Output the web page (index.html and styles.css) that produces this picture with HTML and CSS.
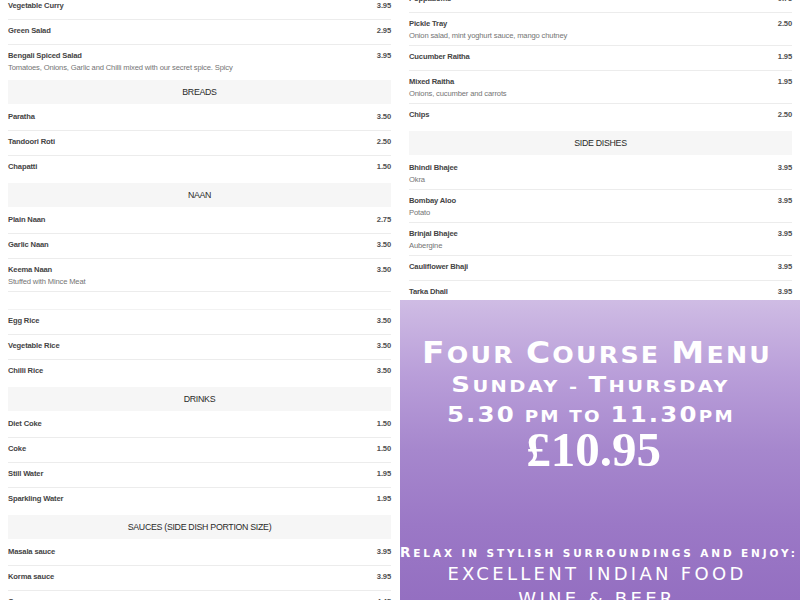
FILE: index.html
```html
<!DOCTYPE html>
<html lang="en">
<head>
<meta charset="utf-8">
<title>Menu</title>
<link rel="stylesheet" href="styles.css">
</head>
<body>
<div class="page">
  <div class="menu">
    <div class="col col-left">
      <div class="item"><div class="item-head"><span class="name">Vegetable Curry</span><span class="price">3.95</span></div></div>
      <div class="item"><div class="item-head"><span class="name">Green Salad</span><span class="price">2.95</span></div></div>
      <div class="item has-desc"><div class="item-head"><span class="name">Bengali Spiced Salad</span><span class="price">3.95</span></div><div class="desc">Tomatoes, Onions, Garlic and Chilli mixed with our secret spice. Spicy</div></div>
      <div class="section-head">BREADS</div>
      <div class="item"><div class="item-head"><span class="name">Paratha</span><span class="price">3.50</span></div></div>
      <div class="item"><div class="item-head"><span class="name">Tandoori Roti</span><span class="price">2.50</span></div></div>
      <div class="item"><div class="item-head"><span class="name">Chapatti</span><span class="price">1.50</span></div></div>
      <div class="section-head">NAAN</div>
      <div class="item"><div class="item-head"><span class="name">Plain Naan</span><span class="price">2.75</span></div></div>
      <div class="item"><div class="item-head"><span class="name">Garlic Naan</span><span class="price">3.50</span></div></div>
      <div class="item has-desc"><div class="item-head"><span class="name">Keema Naan</span><span class="price">3.50</span></div><div class="desc">Stuffed with Mince Meat</div></div>
      <div class="item spacer"></div>
      <div class="item"><div class="item-head"><span class="name">Egg Rice</span><span class="price">3.50</span></div></div>
      <div class="item"><div class="item-head"><span class="name">Vegetable Rice</span><span class="price">3.50</span></div></div>
      <div class="item"><div class="item-head"><span class="name">Chilli Rice</span><span class="price">3.50</span></div></div>
      <div class="section-head">DRINKS</div>
      <div class="item"><div class="item-head"><span class="name">Diet Coke</span><span class="price">1.50</span></div></div>
      <div class="item"><div class="item-head"><span class="name">Coke</span><span class="price">1.50</span></div></div>
      <div class="item"><div class="item-head"><span class="name">Still Water</span><span class="price">1.95</span></div></div>
      <div class="item"><div class="item-head"><span class="name">Sparkling Water</span><span class="price">1.95</span></div></div>
      <div class="section-head">SAUCES (SIDE DISH PORTION SIZE)</div>
      <div class="item"><div class="item-head"><span class="name">Masala sauce</span><span class="price">3.95</span></div></div>
      <div class="item"><div class="item-head"><span class="name">Korma sauce</span><span class="price">3.95</span></div></div>
      <div class="item"><div class="item-head"><span class="name">Curry sauce</span><span class="price">4.45</span></div></div>
    </div>
    <div class="col col-right">
      <div class="item"><div class="item-head"><span class="name">Poppadoms</span><span class="price">0.75</span></div></div>
      <div class="item has-desc"><div class="item-head"><span class="name">Pickle Tray</span><span class="price">2.50</span></div><div class="desc">Onion salad, mint yoghurt sauce, mango chutney</div></div>
      <div class="item"><div class="item-head"><span class="name">Cucumber Raitha</span><span class="price">1.95</span></div></div>
      <div class="item has-desc"><div class="item-head"><span class="name">Mixed Raitha</span><span class="price">1.95</span></div><div class="desc">Onions, cucumber and carrots</div></div>
      <div class="item"><div class="item-head"><span class="name">Chips</span><span class="price">2.50</span></div></div>
      <div class="section-head">SIDE DISHES</div>
      <div class="item has-desc"><div class="item-head"><span class="name">Bhindi Bhajee</span><span class="price">3.95</span></div><div class="desc">Okra</div></div>
      <div class="item has-desc"><div class="item-head"><span class="name">Bombay Aloo</span><span class="price">3.95</span></div><div class="desc">Potato</div></div>
      <div class="item has-desc"><div class="item-head"><span class="name">Brinjal Bhajee</span><span class="price">3.95</span></div><div class="desc">Aubergine</div></div>
      <div class="item"><div class="item-head"><span class="name">Cauliflower Bhaji</span><span class="price">3.95</span></div></div>
      <div class="item"><div class="item-head"><span class="name">Tarka Dhall</span><span class="price">3.95</span></div></div>
      <div class="item"><div class="item-head"><span class="name">Mushroom Bhajee</span><span class="price">3.95</span></div></div>
      <div class="item"><div class="item-head"><span class="name">Sag Aloo</span><span class="price">3.95</span></div></div>
    </div>
  </div>
  <div class="promo">
    <div class="p1"><span class="cap">F</span>our <span class="cap">C</span>ourse <span class="cap">M</span>enu</div>
    <div class="p2"><span class="cap">S</span>unday - <span class="cap">T</span>hursday</div>
    <div class="p3"><span class="cap">5.30</span> pm to <span class="cap">11.30</span>pm</div>
    <div class="p4">£10.95</div>
    <div class="p5"><span class="cap">R</span>elax in stylish surroundings and enjoy:</div>
    <div class="p6">EXCELLENT INDIAN FOOD</div>
    <div class="p7">WINE &amp; BEER</div>
  </div>
</div>
</body>
</html>
```
FILE: styles.css
```css
html, body {
  margin: 0;
  padding: 0;
  background: #ffffff;
  overflow: hidden;
}

.page {
  position: relative;
  width: 800px;
  height: 600px;
  overflow: hidden;
  font-family: "Liberation Sans", Arial, sans-serif;
}

.menu {
  display: grid;
  grid-template-columns: 383px 383px;
  column-gap: 18px;
  padding: 0 8px;
  align-items: start;
}

.col-left { margin-top: -5px; }
.col-right { margin-top: -12px; }

.item {
  padding: 5px 0 7px;
  border-bottom: 1px solid #ececec;
}
.item.has-desc { padding-bottom: 3px; }
.item:has(+ .section-head) { border-bottom-color: transparent; }
.item.spacer {
  height: 18px;
  padding: 0;
  box-sizing: border-box;
  border-bottom-color: #f2f2f2;
}

.item-head {
  display: flex;
  justify-content: space-between;
  line-height: 12px;
  font-size: 7.6px;
  letter-spacing: -0.15px;
  font-weight: bold;
  color: #444444;
}
.price { color: #505050; }

.desc {
  line-height: 12px;
  font-size: 7.6px;
  letter-spacing: -0.15px;
  color: #747474;
}

.section-head {
  margin: 2px 0;
  height: 24px;
  line-height: 24px;
  background: #f6f6f6;
  text-align: center;
  font-size: 8.8px;
  letter-spacing: -0.3px;
  color: #2a2a2a;
}

.promo {
  position: absolute;
  left: 400px;
  top: 300px;
  width: 400px;
  height: 300px;
  box-sizing: border-box;
  padding-right: 6px;
  overflow: hidden;
  background: linear-gradient(180deg, #cfbce4 0%, #b99ed9 25%, #a687cd 50%, #9b78c6 75%, #946fc1 100%);
  color: #ffffff;
  text-align: center;
  font-family: "DejaVu Sans", sans-serif;
  font-weight: bold;
  text-transform: uppercase;
  white-space: nowrap;
}

.promo .cap { line-height: 0; }

.p1 {
  margin-top: 40px;
  font-size: 23px;
  line-height: 30px;
  letter-spacing: 2px;
  transform: scaleX(1.1);
}
.p1 .cap { font-size: 30px; }

.p2, .p3 {
  padding-right: 11px;
  font-size: 16.5px;
  line-height: 30px;
  letter-spacing: 2px;
}
.p2 { margin-top: 2px; transform: scaleX(1.18); }
.p3 { transform: scaleX(1.11); }
.p2 .cap, .p3 .cap { font-size: 22px; }

.p4 {
  padding-right: 7px;
  font-family: "Liberation Serif", "Times New Roman", serif;
  font-size: 49px;
  line-height: 36px;
}

.p5 {
  margin-top: 75px;
  font-size: 10.5px;
  line-height: 20px;
  letter-spacing: 2.9px;
}
.p5 .cap { font-size: 13.5px; }

.p6, .p7 {
  font-weight: normal;
  font-size: 18px;
  line-height: 22px;
  letter-spacing: 3.3px;
}
.p7 { margin-top: 3px; }
```
